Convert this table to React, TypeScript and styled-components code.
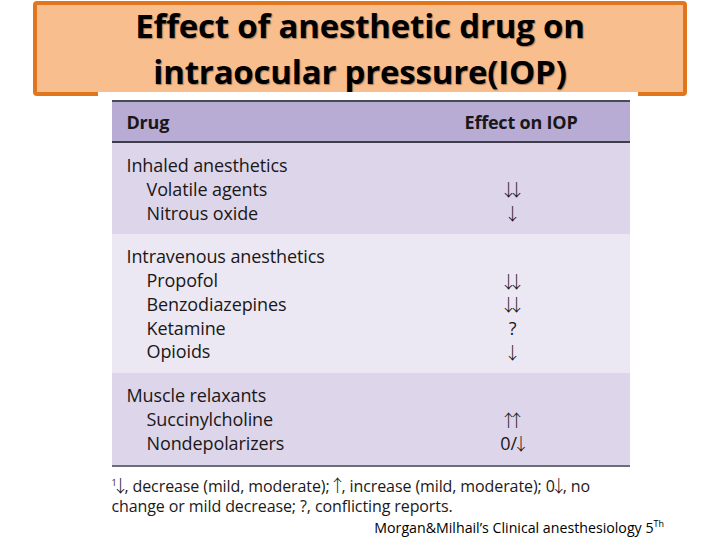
import styled, { createGlobalStyle } from 'styled-components'

const GlobalStyle = createGlobalStyle`
  html, body {
    margin: 0;
    padding: 0;
    background: #ffffff;
  }
  body {
    width: 720px;
    height: 540px;
    overflow: hidden;
  }
`

const Slide = styled.div`
  width: 720px;
  height: 540px;
  display: flex;
  flex-direction: column;
  align-items: center;
  padding-top: 1px;
  box-sizing: border-box;
`

const TitleBox = styled.div`
  width: 654px;
  height: 95px;
  box-sizing: border-box;
  background: #f9be8e;
  border: 4px solid #e2761d;
  border-radius: 4px;
  display: flex;
  flex-direction: column;
  align-items: center;
  justify-content: center;
  font-family: 'Open Sans', 'Noto Sans', sans-serif;
  font-weight: 700;
  font-size: 33px;
  letter-spacing: -0.2px;
  line-height: 46px;
  color: #000;
  text-shadow: 1px 1px 1px rgba(0, 0, 0, 0.35);
`

const TableCard = styled.div`
  position: relative;
  margin-top: -4px;
  width: 540px;
  margin-left: 15px;
  background: #fff;
  padding: 8px 0 0 14px;
  box-sizing: border-box;
  font-family: 'Open Sans', 'Noto Sans', sans-serif;
  color: #1a1718;
`

const Table = styled.div`
  width: 518px;
  border-top: 2px solid #4a4a55;
  border-bottom: 2px solid #6d6d78;
`

const Header = styled.div`
  display: grid;
  grid-template-columns: 338px 1fr;
  height: 39px;
  align-items: center;
  padding-left: 15px;
  background: #b8abd4;
  border-bottom: 2px solid #3f3f4a;
  font-weight: 700;
  font-size: 18px;
  letter-spacing: -0.2px;
`

const Group = styled.div<{ $light?: boolean }>`
  display: grid;
  grid-template-columns: 338px 96px;
  grid-auto-rows: 23.8px;
  align-items: center;
  padding: 10px 0 10px 15px;
  background: ${(p) => (p.$light ? '#ece8f3' : '#ddd5ea')};
  font-size: 18px;
  letter-spacing: -0.1px;
`

const Name = styled.div<{ $sub?: boolean }>`
  padding-left: ${(p) => (p.$sub ? '20px' : '0')};
  white-space: nowrap;
`

const Effect = styled.div`
  text-align: center;
  white-space: nowrap;
`

const Arrow = styled.span`
  font-family: 'Noto Sans CJK JP', 'DejaVu Sans', sans-serif;
  font-weight: 300;
  font-size: 17px;
  margin: 0 -4.5px;
`

const Note = styled.div`
  width: 500px;
  margin-top: 8px;
  font-size: 16px;
  line-height: 20px;
  letter-spacing: -0.1px;
  color: #1a1a1a;
`

const Sup = styled.sup`
  font-size: 9px;
  vertical-align: 6px;
  line-height: 0;
`

const Citation = styled.div`
  align-self: flex-end;
  margin: 2px 56px 0 0;
  font-family: 'Open Sans', sans-serif;
  font-size: 14.2px;
  color: #000;
`

// every arrow goes in the narrow arrow style, the rest stays plain text
const renderEffect = (v: string) =>
  Array.from(v).map((ch, i) =>
    ch === '↓' || ch === '↑' ? <Arrow key={i}>{ch}</Arrow> : <span key={i}>{ch}</span>
  )

type Row = { name: string; effect?: string; sub?: boolean }

const groups: { light?: boolean; rows: Row[] }[] = [
  {
    rows: [
      { name: 'Inhaled anesthetics' },
      { name: 'Volatile agents', effect: '↓↓', sub: true },
      { name: 'Nitrous oxide', effect: '↓', sub: true },
    ],
  },
  {
    light: true,
    rows: [
      { name: 'Intravenous anesthetics' },
      { name: 'Propofol', effect: '↓↓', sub: true },
      { name: 'Benzodiazepines', effect: '↓↓', sub: true },
      { name: 'Ketamine', effect: '?', sub: true },
      { name: 'Opioids', effect: '↓', sub: true },
    ],
  },
  {
    rows: [
      { name: 'Muscle relaxants' },
      { name: 'Succinylcholine', effect: '↑↑', sub: true },
      { name: 'Nondepolarizers', effect: '0/↓', sub: true },
    ],
  },
]

export default function App() {
  return (
    <>
      <GlobalStyle />
      <Slide>
        <TitleBox>
          <div>Effect of anesthetic drug on</div>
          <div>intraocular pressure(IOP)</div>
        </TitleBox>
        <TableCard>
          <Table>
            <Header>
              <div>Drug</div>
              <div>Effect on IOP</div>
            </Header>
            {groups.map((g, i) => (
              <Group key={i} $light={g.light}>
                {g.rows.map((r) => [
                  <Name key={r.name} $sub={r.sub}>{r.name}</Name>,
                  <Effect key={r.name + '-e'}>{renderEffect(r.effect ?? '')}</Effect>,
                ])}
              </Group>
            ))}
          </Table>
          <Note>
            <Sup>1</Sup>{renderEffect('↓')}, decrease (mild, moderate); {renderEffect('↑')}, increase (mild, moderate); 0{renderEffect('↓')}, no change or mild decrease; ?, conflicting reports.
          </Note>
        </TableCard>
        <Citation>
          Morgan&amp;Milhail’s Clinical anesthesiology 5<Sup>Th</Sup>
        </Citation>
      </Slide>
    </>
  )
}
